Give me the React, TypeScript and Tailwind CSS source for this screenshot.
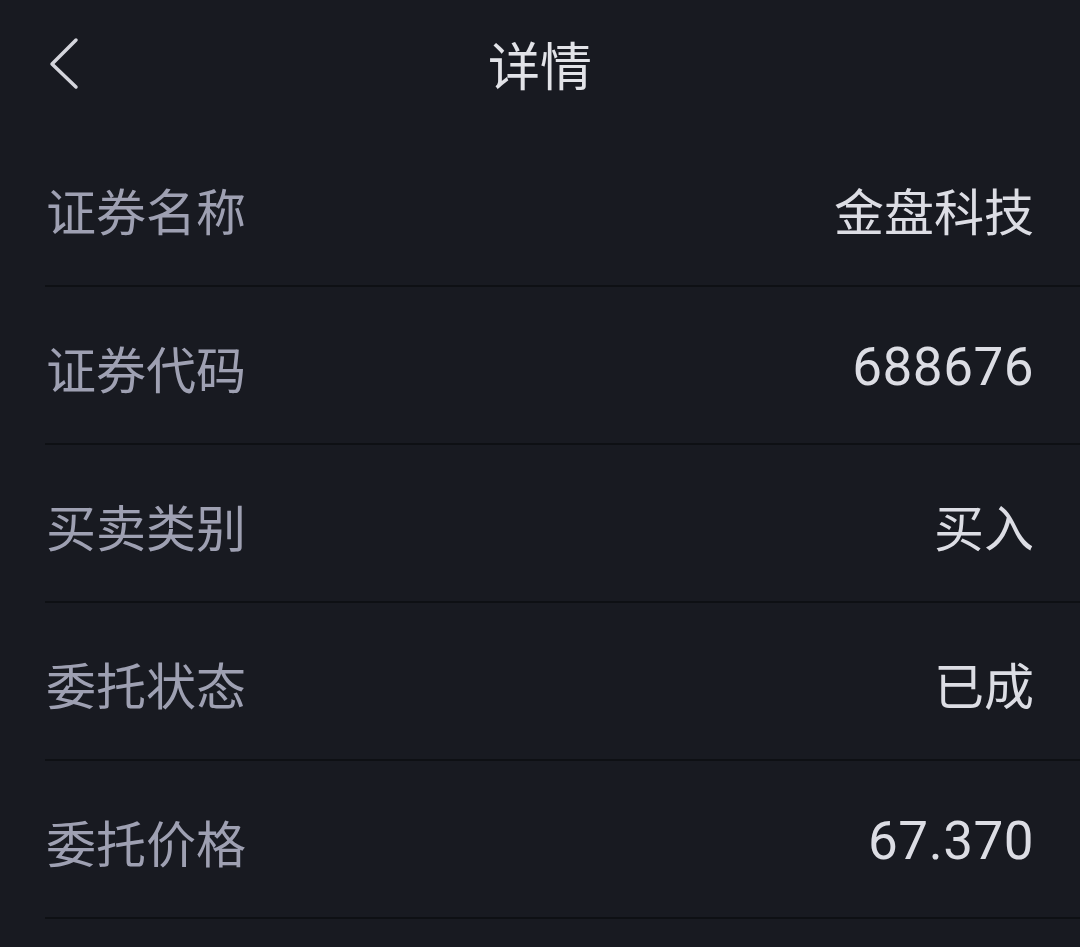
import React from "react";

const rows: [string, string][] = [
  ["证券名称", "金盘科技"],
  ["证券代码", "688676"],
  ["买卖类别", "买入"],
  ["委托状态", "已成"],
  ["委托价格", "67.370"],
];

export default function App() {
  return (
    <div
      className="w-[1080px] h-[947px] overflow-hidden bg-[#181a21]"
      style={{ fontFamily: '"Noto Sans CJK SC", "Noto Sans", sans-serif' }}
    >
      <div className="relative h-[129px] flex items-center justify-center">
        <svg
          className="absolute left-[48px] top-[36px]"
          width="32"
          height="56"
          viewBox="0 0 32 56"
          fill="none"
        >
          <path
            d="M28 4 L4 28 L28 51"
            stroke="#d4d5dc"
            strokeWidth="3.5"
            strokeLinecap="round"
            strokeLinejoin="round"
          />
        </svg>
        <div className="text-[52px] leading-none text-[#e2e3e8] -mt-[1px]">详情</div>
      </div>
      <div className="pl-[45px]">
        {rows.map(([k, v]) => (
          <div
            key={k}
            className="h-[158px] flex items-center justify-between pr-[46px] border-b-2 border-[#0e1014]"
          >
            <span className="text-[50px] leading-none text-[#9ea0b2] pl-[1px] mt-[4px]">{k}</span>
            <span
              className="text-[50px] leading-none text-[#dcdde4] mt-[4px]"
              style={
                /^[0-9.]+$/.test(v)
                  ? { fontFamily: "Roboto, sans-serif", fontSize: "53px", letterSpacing: "0.5px" }
                  : undefined
              }
            >
              {v}
            </span>
          </div>
        ))}
      </div>
    </div>
  );
}
